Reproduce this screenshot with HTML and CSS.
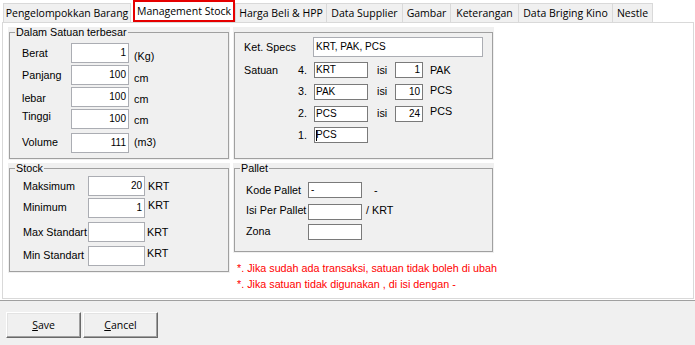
FILE: index.html
```html
<!DOCTYPE html>
<html>
<head>
<meta charset="utf-8">
<link rel="stylesheet" href="styles.css">
</head>
<body>
<div class="tabs">
  <div class="tab tab-first">Pengelompokkan Barang</div>
  <div class="tab tab-active">Management Stock</div>
  <div class="tab tab-after w-harga">Harga Beli &amp; HPP</div>
  <div class="tab w-supplier">Data Supplier</div>
  <div class="tab w-gambar">Gambar</div>
  <div class="tab w-ket">Keterangan</div>
  <div class="tab w-kino">Data Briging Kino</div>
  <div class="tab w-nestle">Nestle</div>
</div>
<div class="panel">
  <div class="layout">
    <div class="pane">
      <fieldset class="group">
        <legend>Dalam Satuan terbesar</legend>
        <div class="body body-dim">
          <div class="row r20"><span class="lbl w49">Berat</span><div class="field w58 num">1</div><span class="unit ml5 dn3">(Kg)</span></div>
          <div class="row r20 mt2"><span class="lbl w49">Panjang</span><div class="field w58 num">100</div><span class="unit ml5 dn3">cm</span></div>
          <div class="row r20 mt2"><span class="lbl w49 dn1">lebar</span><div class="field w58 num">100</div><span class="unit ml5 dn2">cm</span></div>
          <div class="row r20 mt2"><span class="lbl w49 up3">Tinggi</span><div class="field w58 num">100</div><span class="unit ml5 dn1">cm</span></div>
          <div class="row r20 mt4"><span class="lbl w49 up1">Volume</span><div class="field w58 num">111</div><span class="unit ml5 up1">(m3)</span></div>
        </div>
      </fieldset>
    </div>

    <div class="pane pane-plain">
      <div class="group spec">
        <div class="row r20"><span class="lbl w69">Ket. Specs</span><div class="field w170 pl2">KRT, PAK, PCS</div></div>
        <div class="row r16 mt5"><span class="lbl w54">Satuan</span><span class="no">4.</span><div class="field dark h16 w54">KRT</div><span class="isi">isi</span><div class="field dark h16 w28 num">1</div><span class="unit ml7">PAK</span></div>
        <div class="row r16 mt6"><span class="lbl w54"></span><span class="no up1">3.</span><div class="field dark h16 w54">PAK</div><span class="isi up1">isi</span><div class="field dark h16 w28 num">10</div><span class="unit ml7 up2">PCS</span></div>
        <div class="row r16 mt6"><span class="lbl w54"></span><span class="no up1">2.</span><div class="field dark h16 w54">PCS</div><span class="isi up1">isi</span><div class="field dark h16 w28 num">24</div><span class="unit ml7 up3">PCS</span></div>
        <div class="row r16 mt5"><span class="lbl w54"></span><span class="no">1.</span><div class="field dark h16 w54"><span class="caret"></span>PCS</div></div>
      </div>
    </div>

    <div class="pane">
      <fieldset class="group">
        <legend>Stock</legend>
        <div class="body body-stock">
          <div class="row r20"><span class="lbl w65">Maksimum</span><div class="field w57 num">20</div><span class="unit ml3">KRT</span></div>
          <div class="row r20 mt2"><span class="lbl w65 up1">Minimum</span><div class="field w57 num">1</div><span class="unit ml3 up3">KRT</span></div>
          <div class="row r20 mt4"><span class="lbl w65">Max Standart</span><div class="field w57 num"></div><span class="unit ml2">KRT</span></div>
          <div class="row r20 mt4"><span class="lbl w65 up1">Min Standart</span><div class="field w57 num"></div><span class="unit ml2 up3">KRT</span></div>
        </div>
      </fieldset>
    </div>

    <div class="col">
      <div class="pane">
        <fieldset class="group">
          <legend>Pallet</legend>
          <div class="body body-pallet">
            <div class="row r16"><span class="lbl w62">Kode Pallet</span><div class="field dark h16 w54 pl2">-</div><span class="unit ml12">-</span></div>
            <div class="row r16 mt6"><span class="lbl w62 up2">Isi Per Pallet</span><div class="field dark h16 w54"></div><span class="unit ml4 up2">/ KRT</span></div>
            <div class="row r16 mt4"><span class="lbl w62 up1">Zona</span><div class="field dark h16 w54"></div></div>
          </div>
        </fieldset>
      </div>
      <div class="notes">
        <div>*. Jika sudah ada transaksi, satuan tidak boleh di ubah</div>
        <div>*. Jika satuan tidak digunakan , di isi dengan -</div>
      </div>
    </div>
  </div>
</div>
<div class="footer">
  <button class="btn"><u>S</u>ave</button>
  <button class="btn"><u>C</u>ancel</button>
</div>
</body>
</html>
```
FILE: styles.css
```css
* { box-sizing: border-box; }

body {
  margin: 0;
  width: 695px;
  height: 345px;
  overflow: hidden;
  background: #fff;
  color: #000;
  font-family: "Liberation Sans", Arial, sans-serif;
  font-size: 10.75px;
}

/* ---------- tabs ---------- */
.tabs {
  display: flex;
  align-items: flex-end;
  height: 22px;
  padding-left: 3px;
  font-family: "Open Sans", "Noto Sans", sans-serif;
  font-size: 10.5px;
}
.tab {
  height: 19px;
  display: flex;
  align-items: center;
  justify-content: center;
  white-space: nowrap;
  background: #f0f0f0;
  border: 1px solid #d9d9d9;
  border-left: none;
  border-bottom: none;
}
.tab-first { width: 128px; margin-right: 2px; border-left: 1px solid #d9d9d9; }
.tab-active {
  width: 102px;
  height: 22px;
  background: #fff;
  border: 2px solid #e60000;
}
.tab-after { border-left: 1px solid #d9d9d9; }
.w-harga { width: 92px; }
.w-supplier { width: 76px; }
.w-gambar { width: 48px; }
.w-ket { width: 68px; }
.w-kino { width: 94px; }
.w-nestle { width: 40px; }

/* ---------- panel ---------- */
.panel {
  height: 277px;
  margin: 0 1px 0 2px;
  border: 1px solid #d9d9d9;
  padding: 4px 0 0 5px;
}
.layout {
  display: grid;
  grid-template-columns: 222px 261px;
  column-gap: 3px;
  row-gap: 3px;
  align-items: start;
}
.pane {
  background: #f0f0f0;
  display: flex;
  flex-direction: column;
  padding: 0 1px 1px 1px;
}
.pane-plain { padding-top: 5px; }

.group {
  margin: 0;
  padding: 0;
  min-width: 0;
  border: 1px solid #a0a0a0;
}
fieldset.group { margin-top: -1px; }
legend {
  margin-left: 5px;
  padding: 0 1px;
  line-height: 13px;
}

.body-dim { padding: 4px 0 5px 12px; }
.body-stock { padding: 1px 0 5px 13px; }
.body-pallet { padding: 7px 0 11px 11px; }
.spec { height: 127px; padding: 4px 0 0 9px; }

.row { display: flex; align-items: center; }
.r20 { height: 20px; }
.r16 { height: 16px; }
.mt2 { margin-top: 2px; }
.mt4 { margin-top: 4px; }
.mt5 { margin-top: 5px; }
.mt6 { margin-top: 6px; }

.lbl, .unit, .no, .isi { line-height: 13px; white-space: nowrap; flex: none; }
.w49 { width: 49px; }
.w54 { width: 54px; }
.w57 { width: 57px; }
.w58 { width: 58px; }
.w62 { width: 62px; }
.w65 { width: 65px; }
.w69 { width: 69px; }
.w28 { width: 28px; }
.w170 { width: 170px; }
.no { width: 16px; }
.isi { width: 18px; margin-left: 9px; }
.ml2 { margin-left: 2px; }
.ml3 { margin-left: 3px; }
.ml4 { margin-left: 4px; }
.ml5 { margin-left: 5px; }
.ml7 { margin-left: 7px; }
.ml12 { margin-left: 12px; }

/* small vertical nudges (flow margins, centred rows) */
.dn1 { margin-top: 2px; }
.dn2 { margin-top: 4px; }
.dn3 { margin-top: 6px; }
.up1 { margin-bottom: 2px; }
.up2 { margin-bottom: 4px; }
.up3 { margin-bottom: 6px; }

.field {
  flex: none;
  height: 20px;
  line-height: 18px;
  padding: 0 2px 0 1px;
  background: #fff;
  border: 1px solid #abadb3;
  font-size: 10px;
  white-space: nowrap;
  overflow: hidden;
  display: flex;
  align-items: center;
}
.field.num { justify-content: flex-end; padding-right: 2px; }
.field.pl2 { padding-left: 2px; }
.field.dark { border-color: #7a7a7a; }
.field.h16 { height: 16px; line-height: 14px; }
.caret {
  display: inline-block;
  width: 1px;
  height: 11px;
  background: #000;
  margin-right: -1px;
}

.notes {
  margin-top: 7px;
  padding-left: 4px;
  color: #ff0000;
  line-height: 16px;
  white-space: nowrap;
}

/* ---------- footer ---------- */
.footer {
  margin-top: 1px;
  height: 45px;
  border-top: 1px solid #a0a0a0;
  background: #f0f0f0;
  padding: 11px 0 0 6px;
  display: flex;
  gap: 2px;
  align-items: flex-start;
}
.btn {
  width: 75px;
  height: 26px;
  padding: 0;
  background: #f0f0f0;
  border: 1px solid;
  border-color: #fff #696969 #696969 #fff;
  box-shadow: inset -1px -1px 0 #a0a0a0, inset 1px 1px 0 #e3e3e3;
  font-family: "Open Sans", "Noto Sans", sans-serif;
  font-size: 10.5px;
  color: #000;
}
```
